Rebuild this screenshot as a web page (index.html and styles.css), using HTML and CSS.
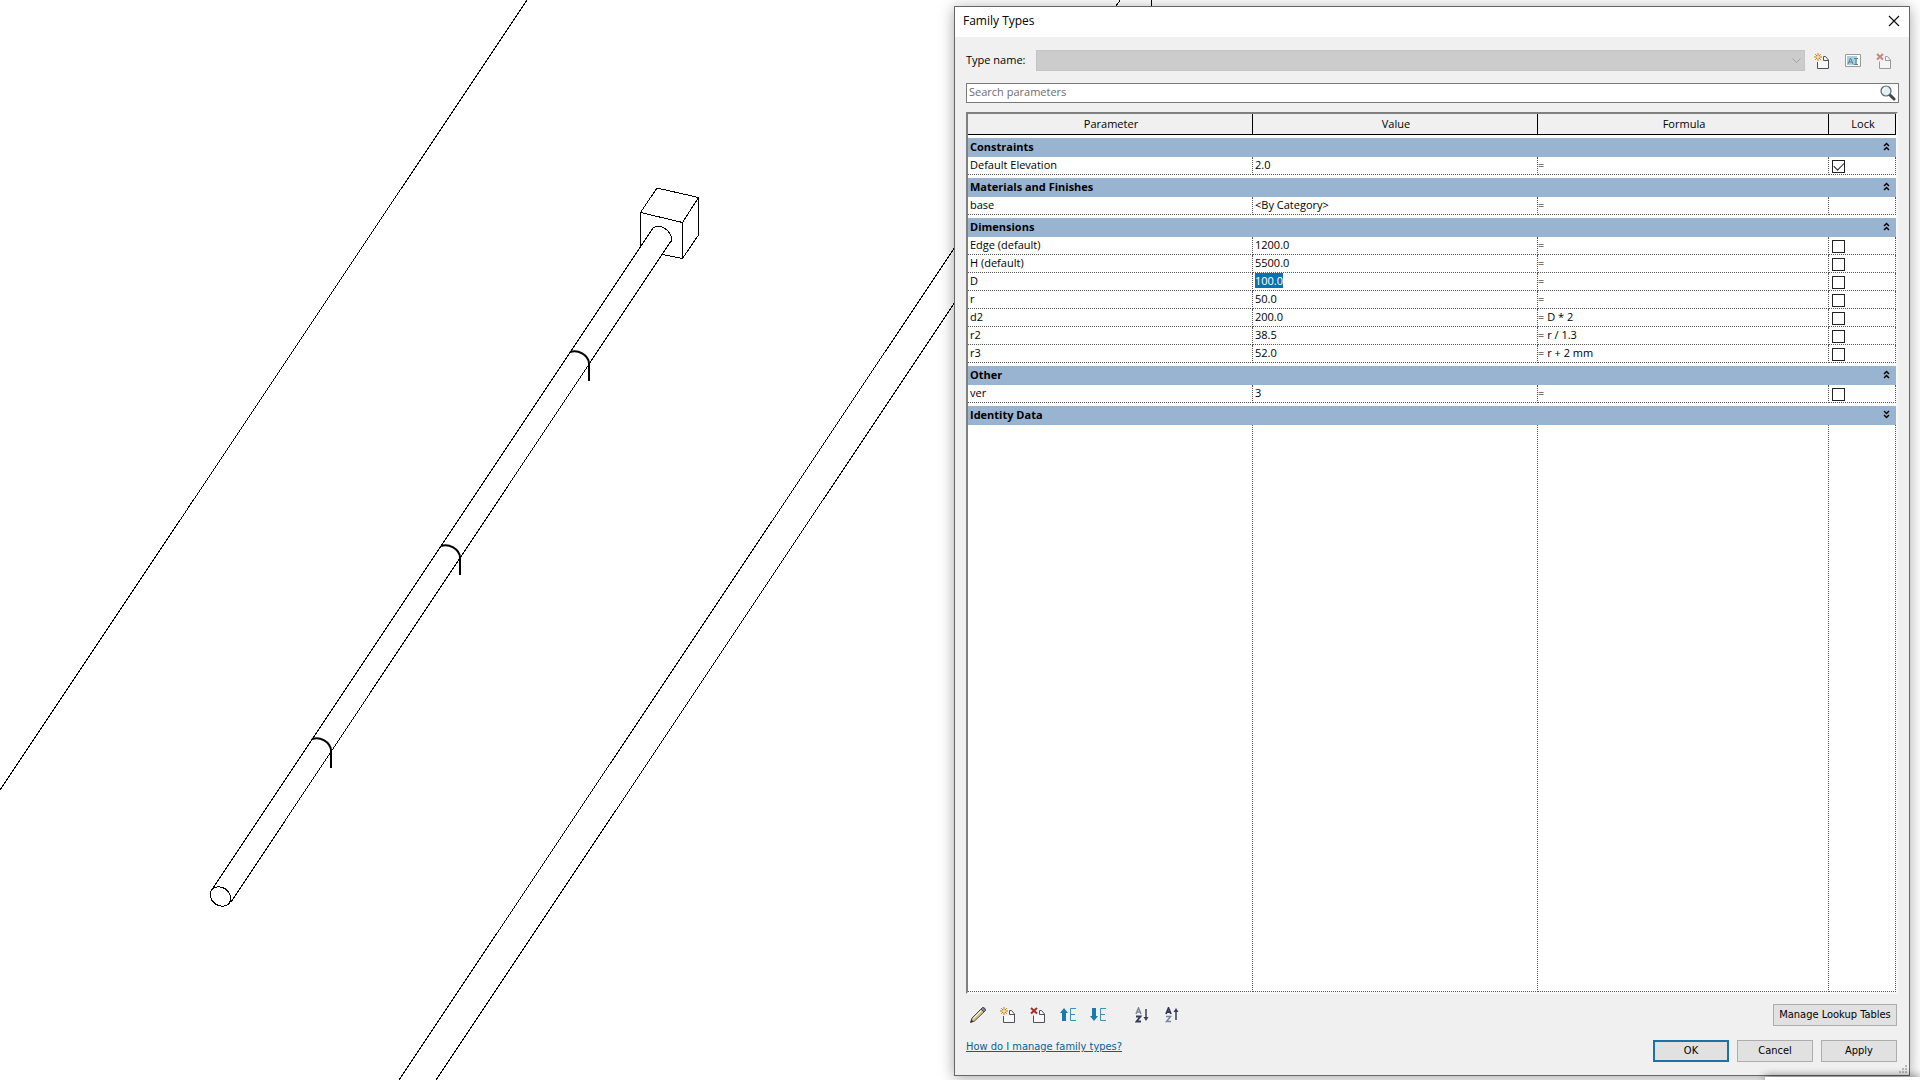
FILE: index.html
```html
<!DOCTYPE html>
<html lang="en">
<head>
<meta charset="utf-8">
<title>Family Types</title>
<link rel="stylesheet" href="styles.css">
</head>
<body>
<main class="workspace">
  <svg class="model" viewBox="0 0 1920 1080" preserveAspectRatio="xMinYMin slice" role="img" aria-label="Model view">
    <path d="M527 0 0 790M955 247 399 1080M955 302 436 1080M1119 0V2L1115 7M1151.5 0V8"/>
    <path d="M653 228 213 888M671 241 231 902"/>
    <path d="M640.5 247V212.5L657 188 698.5 197.5V235L682.5 258.500 662 254.500M640.500 212.500 682.500 222.500V258.500M682.500 222.500 698.500 197.500"/>
    <path d="M653 228C660 224 664 228 667 230C671 234 673 238 671 242"/>
    <ellipse cx="220.500" cy="896.500" rx="11" ry="9" transform="rotate(35 220.500 896.500)"/>
    <g class="band">
      <path id="band" d="M570 352C578 349 588 355 589 363V381"/>
      <use href="#band" x="-129" y="194"/>
      <use href="#band" x="-258" y="387"/>
    </g>
  </svg>
  <div class="back-window"></div>

  <section class="dialog" role="dialog" aria-labelledby="dialog-title">
    <header class="titlebar">
      <h1 id="dialog-title">Family Types</h1>
      <button class="icon-btn" aria-label="Close"><svg width="12" height="12" viewBox="0 0 12 12"><path d="M1 1 11 11M11 1 1 11" fill="none" stroke="#111" stroke-width="1.200"/></svg></button>
    </header>

    <div class="content">
      <div class="type-row">
        <label for="type-name">Type name:</label>
        <div class="combo">
          <select id="type-name" disabled><option></option></select>
          <svg width="9" height="6" viewBox="0 0 9 6"><path d="M.5 .5 4.500 4.500 8.500 .5" fill="none" stroke="#a2a2a2"/></svg>
        </div>
        <div class="type-tools">
          <button class="icon-btn" aria-label="New type"><svg width="16" height="16" viewBox="0 0 16 16"><use href="#new-page"/></svg></button>
          <button class="icon-btn" aria-label="Rename type" disabled><svg width="16" height="16" viewBox="0 0 16 16"><path d="M.5 1.500H15.500V13.500H.5Z" fill="#fff" stroke="#999"/><path d="M2 3H12V12H2Z" fill="#a5d0e2"/><path d="M3 11 5.500 5 8 11M4 9H7M9 5.500H13M9 11.500H13M11 5.500V11.500" fill="none" stroke="#607f8c"/></svg></button>
          <button class="icon-btn faded" aria-label="Delete type" disabled><svg width="16" height="16" viewBox="0 0 16 16"><use href="#delete-page"/></svg></button>
        </div>
      </div>

      <div class="search">
        <input type="search" placeholder="Search parameters" aria-label="Search parameters">
        <button class="icon-btn" aria-label="Search"><svg width="16" height="16" viewBox="0 0 16 16"><path d="M9.500 9.500 14 14" stroke="#444" stroke-width="3" stroke-linecap="round"/><circle cx="6" cy="6" r="5" fill="#e0f1f3" stroke="#54676b" stroke-width="1.200"/><path d="M3 6A3 3 0 0 1 6 3" fill="none" stroke="#fff"/></svg></button>
      </div>

      <div class="table-frame">
        <table class="params">
          <colgroup><col><col><col class="col-formula"><col class="col-lock"></colgroup>
          <thead><tr><th>Parameter</th><th>Value</th><th>Formula</th><th>Lock</th></tr></thead>
          <tbody>
            <tr class="group"><th colspan="4"><div>Constraints<button class="icon-btn" aria-label="Collapse"><svg width="7" height="9" viewBox="0 0 7 9"><use href="#chevrons-up"/></svg></button></div></th></tr>
            <tr><td>Default Elevation</td><td>2.0</td><td>=</td><td><input type="checkbox" checked aria-label="Lock Default Elevation"></td></tr>
            <tr class="group"><th colspan="4"><div>Materials and Finishes<button class="icon-btn" aria-label="Collapse"><svg width="7" height="9" viewBox="0 0 7 9"><use href="#chevrons-up"/></svg></button></div></th></tr>
            <tr><td>base</td><td>&lt;By Category&gt;</td><td>=</td><td></td></tr>
            <tr class="group"><th colspan="4"><div>Dimensions<button class="icon-btn" aria-label="Collapse"><svg width="7" height="9" viewBox="0 0 7 9"><use href="#chevrons-up"/></svg></button></div></th></tr>
            <tr><td>Edge (default)</td><td>1200.0</td><td>=</td><td><input type="checkbox" aria-label="Lock Edge"></td></tr>
            <tr><td>H (default)</td><td>5500.0</td><td>=</td><td><input type="checkbox" aria-label="Lock H"></td></tr>
            <tr><td>D</td><td><input class="editing" type="text" value="100.0" aria-label="D value"></td><td>=</td><td><input type="checkbox" aria-label="Lock D"></td></tr>
            <tr><td>r</td><td>50.0</td><td>=</td><td><input type="checkbox" aria-label="Lock r"></td></tr>
            <tr><td>d2</td><td>200.0</td><td>= D * 2</td><td><input type="checkbox" aria-label="Lock d2"></td></tr>
            <tr><td>r2</td><td>38.5</td><td>= r / 1.3</td><td><input type="checkbox" aria-label="Lock r2"></td></tr>
            <tr><td>r3</td><td>52.0</td><td>= r + 2 mm</td><td><input type="checkbox" aria-label="Lock r3"></td></tr>
            <tr class="group"><th colspan="4"><div>Other<button class="icon-btn" aria-label="Collapse"><svg width="7" height="9" viewBox="0 0 7 9"><use href="#chevrons-up"/></svg></button></div></th></tr>
            <tr><td>ver</td><td>3</td><td>=</td><td><input type="checkbox" aria-label="Lock ver"></td></tr>
            <tr class="group"><th colspan="4"><div>Identity Data<button class="icon-btn" aria-label="Expand"><svg width="7" height="9" viewBox="0 0 7 9"><path d="M1 1 3.500 3.500 6 1M1 5 3.500 7.500 6 5" fill="none" stroke="#000" stroke-width="1.500"/></svg></button></div></th></tr>
            <tr class="filler"><td></td><td></td><td></td><td></td></tr>
          </tbody>
        </table>
      </div>

      <div class="tool-row">
        <div class="tools">
          <button class="icon-btn" aria-label="Edit parameter"><svg width="16" height="16" viewBox="0 0 16 16"><path d="M.5 15.500 2 11 12 1Q14 0 15.500 2.500 15.500 4 14.500 4.500L4.500 14Z" fill="#d6c496" stroke="#4c4c4c"/><path d="M11 2 14 5 15.500 3.500Q15.500 .5 12.500 .5Z" fill="#888" stroke="#4c4c4c"/><path d="M3.500 11.500 11 4" stroke="#fff6d5"/><path d="M.5 15.500 1.500 12.500 3.500 14.500Z" fill="#333"/></svg></button>
          <button class="icon-btn" aria-label="New parameter"><svg width="16" height="16" viewBox="0 0 16 16">
            <g id="new-page"><path d="M3.500 9V15.500H14.500V7L11.500 3.500H9.500V7.500H14" fill="#f8f8f8" stroke="#505058"/><path d="M4 0V8M0 4H8M1.200 1.200 6.800 6.800M6.800 1.200 1.200 6.800" stroke="#c37a1c"/><circle cx="4" cy="4" r="1.500" fill="#ffe08a"/></g></svg></button>
          <button class="icon-btn" aria-label="Delete parameter"><svg width="16" height="16" viewBox="0 0 16 16">
            <g id="delete-page"><path d="M3.500 8.500V15.500H14.500V7L11.500 3.500H9.500V7.500H14" fill="#f8f8f8" stroke="#505058"/><path d="M1 1 7 6.500M7 1 1 6.500" stroke="#a82b2b" stroke-width="2"/></g></svg></button>
          <button class="icon-btn" aria-label="Move up"><svg width="16" height="16" viewBox="0 0 16 16"><path d="M4 1 8 6H6V14H2V6H0Z" fill="#187baa"/><path d="M16 1.500H10.500V13.500H16M10.500 7.500H15" fill="none" stroke="#3c91b8"/></svg></button>
          <button class="icon-btn" aria-label="Move down"><svg width="16" height="16" viewBox="0 0 16 16"><path d="M4 14 8 9H6V1H2V9H0Z" fill="#187baa"/><path d="M16 1.500H10.500V13.500H16M10.500 7.500H15" fill="none" stroke="#3c91b8"/></svg></button>
          <button class="icon-btn sort" aria-label="Sort ascending"><svg width="16" height="16" viewBox="0 0 16 16"><path d="M1 7 3.500 1 6 7M2 5H5" fill="none" stroke="#7b8798" stroke-width="1.500"/><path d="M1 9.500H5.500L1.500 14.500H6" fill="none" stroke="#333b52" stroke-width="1.800"/><path d="M11 2V11" fill="none" stroke="#34415c" stroke-width="1.500"/><path d="M8.500 10H13.500L11 14Z" fill="#34415c"/></svg></button>
          <button class="icon-btn" aria-label="Sort descending"><svg width="16" height="16" viewBox="0 0 16 16"><path d="M1 7 3.500 1 6 7M2 5H5" fill="none" stroke="#333b52" stroke-width="1.800"/><path d="M1 9.500H5.500L1.500 14.500H6" fill="none" stroke="#7b8798" stroke-width="1.500"/><path d="M11 13V4" fill="none" stroke="#34415c" stroke-width="1.500"/><path d="M8.500 5H13.500L11 1Z" fill="#34415c"/></svg></button>
        </div>
        <button class="btn btn-wide">Manage Lookup Tables</button>
      </div>

      <footer class="actions">
        <a href="#help">How do I manage family types?</a>
        <div class="buttons">
          <button class="btn btn-default">OK</button>
          <button class="btn">Cancel</button>
          <button class="btn">Apply</button>
        </div>
      </footer>
    </div>
    <svg class="grip" width="9" height="9" viewBox="0 0 9 9"><path d="M6 0H8V2H6ZM3 3H5V5H3ZM6 3H8V5H6ZM0 6H2V8H0ZM3 6H5V8H3ZM6 6H8V8H6Z" fill="#b8b8b8"/></svg>
  </section>
</main>
<svg class="defs" aria-hidden="true"><path id="chevrons-up" d="M1 4 3.500 1.500 6 4M1 8 3.500 5.500 6 8" fill="none" stroke="#000" stroke-width="1.500"/></svg>
</body>
</html>
```
FILE: styles.css
```css
* { box-sizing: border-box; }

body {
  margin: 0;
  background: #fff;
  color: #000;
  font: 11px/16px "Open Sans", "Noto Sans", sans-serif;
}

.workspace {
  position: relative;
  height: 100vh;
  min-height: 600px;
  overflow: hidden;
}

.model {
  display: block;
  width: 100%;
  height: 100%;
  fill: none;
  stroke: #000;
  stroke-width: 1;
  shape-rendering: crispEdges;
}
.band { stroke-width: 2; shape-rendering: geometricPrecision; }
.defs { display: none; }

.back-window {
  position: absolute;
  right: 0;
  bottom: 0;
  width: 155px;
  height: 3px;
  background: #fff;
  box-shadow: 0 0 8px #000;
  z-index: 1;
}

.dialog {
  position: absolute;
  top: 6px;
  right: 10px;
  bottom: 4px;
  width: calc(50% - 4px);
  display: flex;
  flex-direction: column;
  background: #f0f0f0;
  border: 1px solid #666;
  box-shadow: 0 2px 14px rgba(0, 0, 0, .35);
}

.titlebar {
  display: flex;
  align-items: center;
  justify-content: space-between;
  height: 30px;
  padding: 0 7px 2px 8px;
  background: #fff;
}
.titlebar h1 { margin: 0; font-size: 12px; font-weight: 400; }

.content {
  flex: 1;
  min-height: 0;
  display: flex;
  flex-direction: column;
  padding: 13px 10px 13px 11px;
}

button, input, select { font: inherit; color: inherit; margin: 0; }

.icon-btn {
  display: grid;
  place-items: center;
  min-width: 16px;
  padding: 0;
  border: 0;
  background: none;
}
.icon-btn svg { display: block; }
.faded { opacity: .55; }

.type-row { display: flex; align-items: center; height: 21px; }
.type-row label { width: 70px; padding-bottom: 2px; }
.combo { flex: 1; display: grid; align-items: center; }
.combo > * { grid-area: 1 / 1; }
.combo select {
  width: 100%;
  height: 21px;
  appearance: none;
  border: 1px solid #c4c4c4;
  border-radius: 0;
  background: #ccc;
  opacity: 1;
}
.combo svg { justify-self: end; margin-right: 4px; }
.type-tools { display: flex; gap: 15px; padding: 0 7px 0 9px; }

.search {
  display: flex;
  height: 20px;
  margin-top: 12px;
  border: 1px solid #7a7a7a;
  background: #fff;
}
.search input {
  flex: 1;
  appearance: none;
  border: 0;
  padding: 0 2px 2px;
  background: none;
  outline: none;
}
.search input::placeholder { color: #6d6d6d; opacity: 1; }
.search button { padding: 0 2px 1px 0; }

.table-frame {
  flex: 1;
  min-height: 0;
  margin: 9px 1px 0 0;
  border: 2px solid;
  border-color: #808080 #f8f8f8 #f8f8f8 #808080;
  background: #fff;
}

.params {
  width: 100%;
  height: 100%;
  table-layout: fixed;
  border-collapse: separate;
  border-spacing: 0;
}
.col-formula { width: 291px; }
.col-lock { width: 67px; }

.params thead th {
  height: 21px;
  padding: 0 0 0 2px;
  background: #f0f0f0;
  border-right: 1px solid #000;
  border-bottom: 1px solid #000;
  font-weight: 400;
}
.params td {
  height: 18px;
  padding: 0 2px 2px;
  border-right: 1px dotted #555;
  border-bottom: 1px dotted #555;
  line-height: 15px;
}
.params td:nth-child(3) { padding-left: 0; }
.params td:nth-child(4) { padding: 0 0 0 3px; }
.group th {
  height: 22px;
  padding: 0 0 2px;
  border-top: 3px solid #fff;
  background: #99b4d1;
  background-clip: padding-box;
  text-align: left;
  font-weight: 700;
}
.group div {
  display: flex;
  align-items: center;
  justify-content: space-between;
  padding: 0 2px;
}
.params .filler td { height: auto; }

.params input[type="checkbox"] {
  display: grid;
  place-items: center;
  appearance: none;
  width: 13px;
  height: 13px;
  margin-top: 2px;
  border: 1px solid #222;
  background: #fff;
}
.params input[type="checkbox"]:checked::before {
  content: "";
  width: 9px;
  height: 5px;
  margin-bottom: 3px;
  border: solid #222;
  border-width: 0 0 1px 1px;
  transform: rotate(-45deg);
}

.editing {
  display: block;
  field-sizing: content;
  height: 15px;
  padding: 0;
  border: 0;
  background: #0b72ad;
  color: #fff;
}

.tool-row, .actions {
  display: flex;
  justify-content: space-between;
  align-items: center;
  height: 22px;
  padding-right: 2px;
}
.tool-row { margin-top: 10px; padding-left: 4px; }
.tools { display: flex; gap: 14px; }
.tools .sort { margin-left: 15px; }

.actions { margin-top: 14px; }
.actions a {
  align-self: flex-start;
  margin-top: -1px;
  color: #0b5f94;
  font-family: "DejaVu Sans Condensed", "DejaVu Sans", sans-serif;
}
.buttons { display: flex; gap: 8px; }

.btn {
  width: 76px;
  height: 22px;
  padding: 0;
  border: 1px solid #adadad;
  background: #e1e1e1;
  font-family: "DejaVu Sans Condensed", "DejaVu Sans", sans-serif;
}
.btn-wide { width: 124px; }
.btn-default { border: 2px solid #1a72a8; }

.grip { position: absolute; right: 1px; bottom: 1px; }
```
